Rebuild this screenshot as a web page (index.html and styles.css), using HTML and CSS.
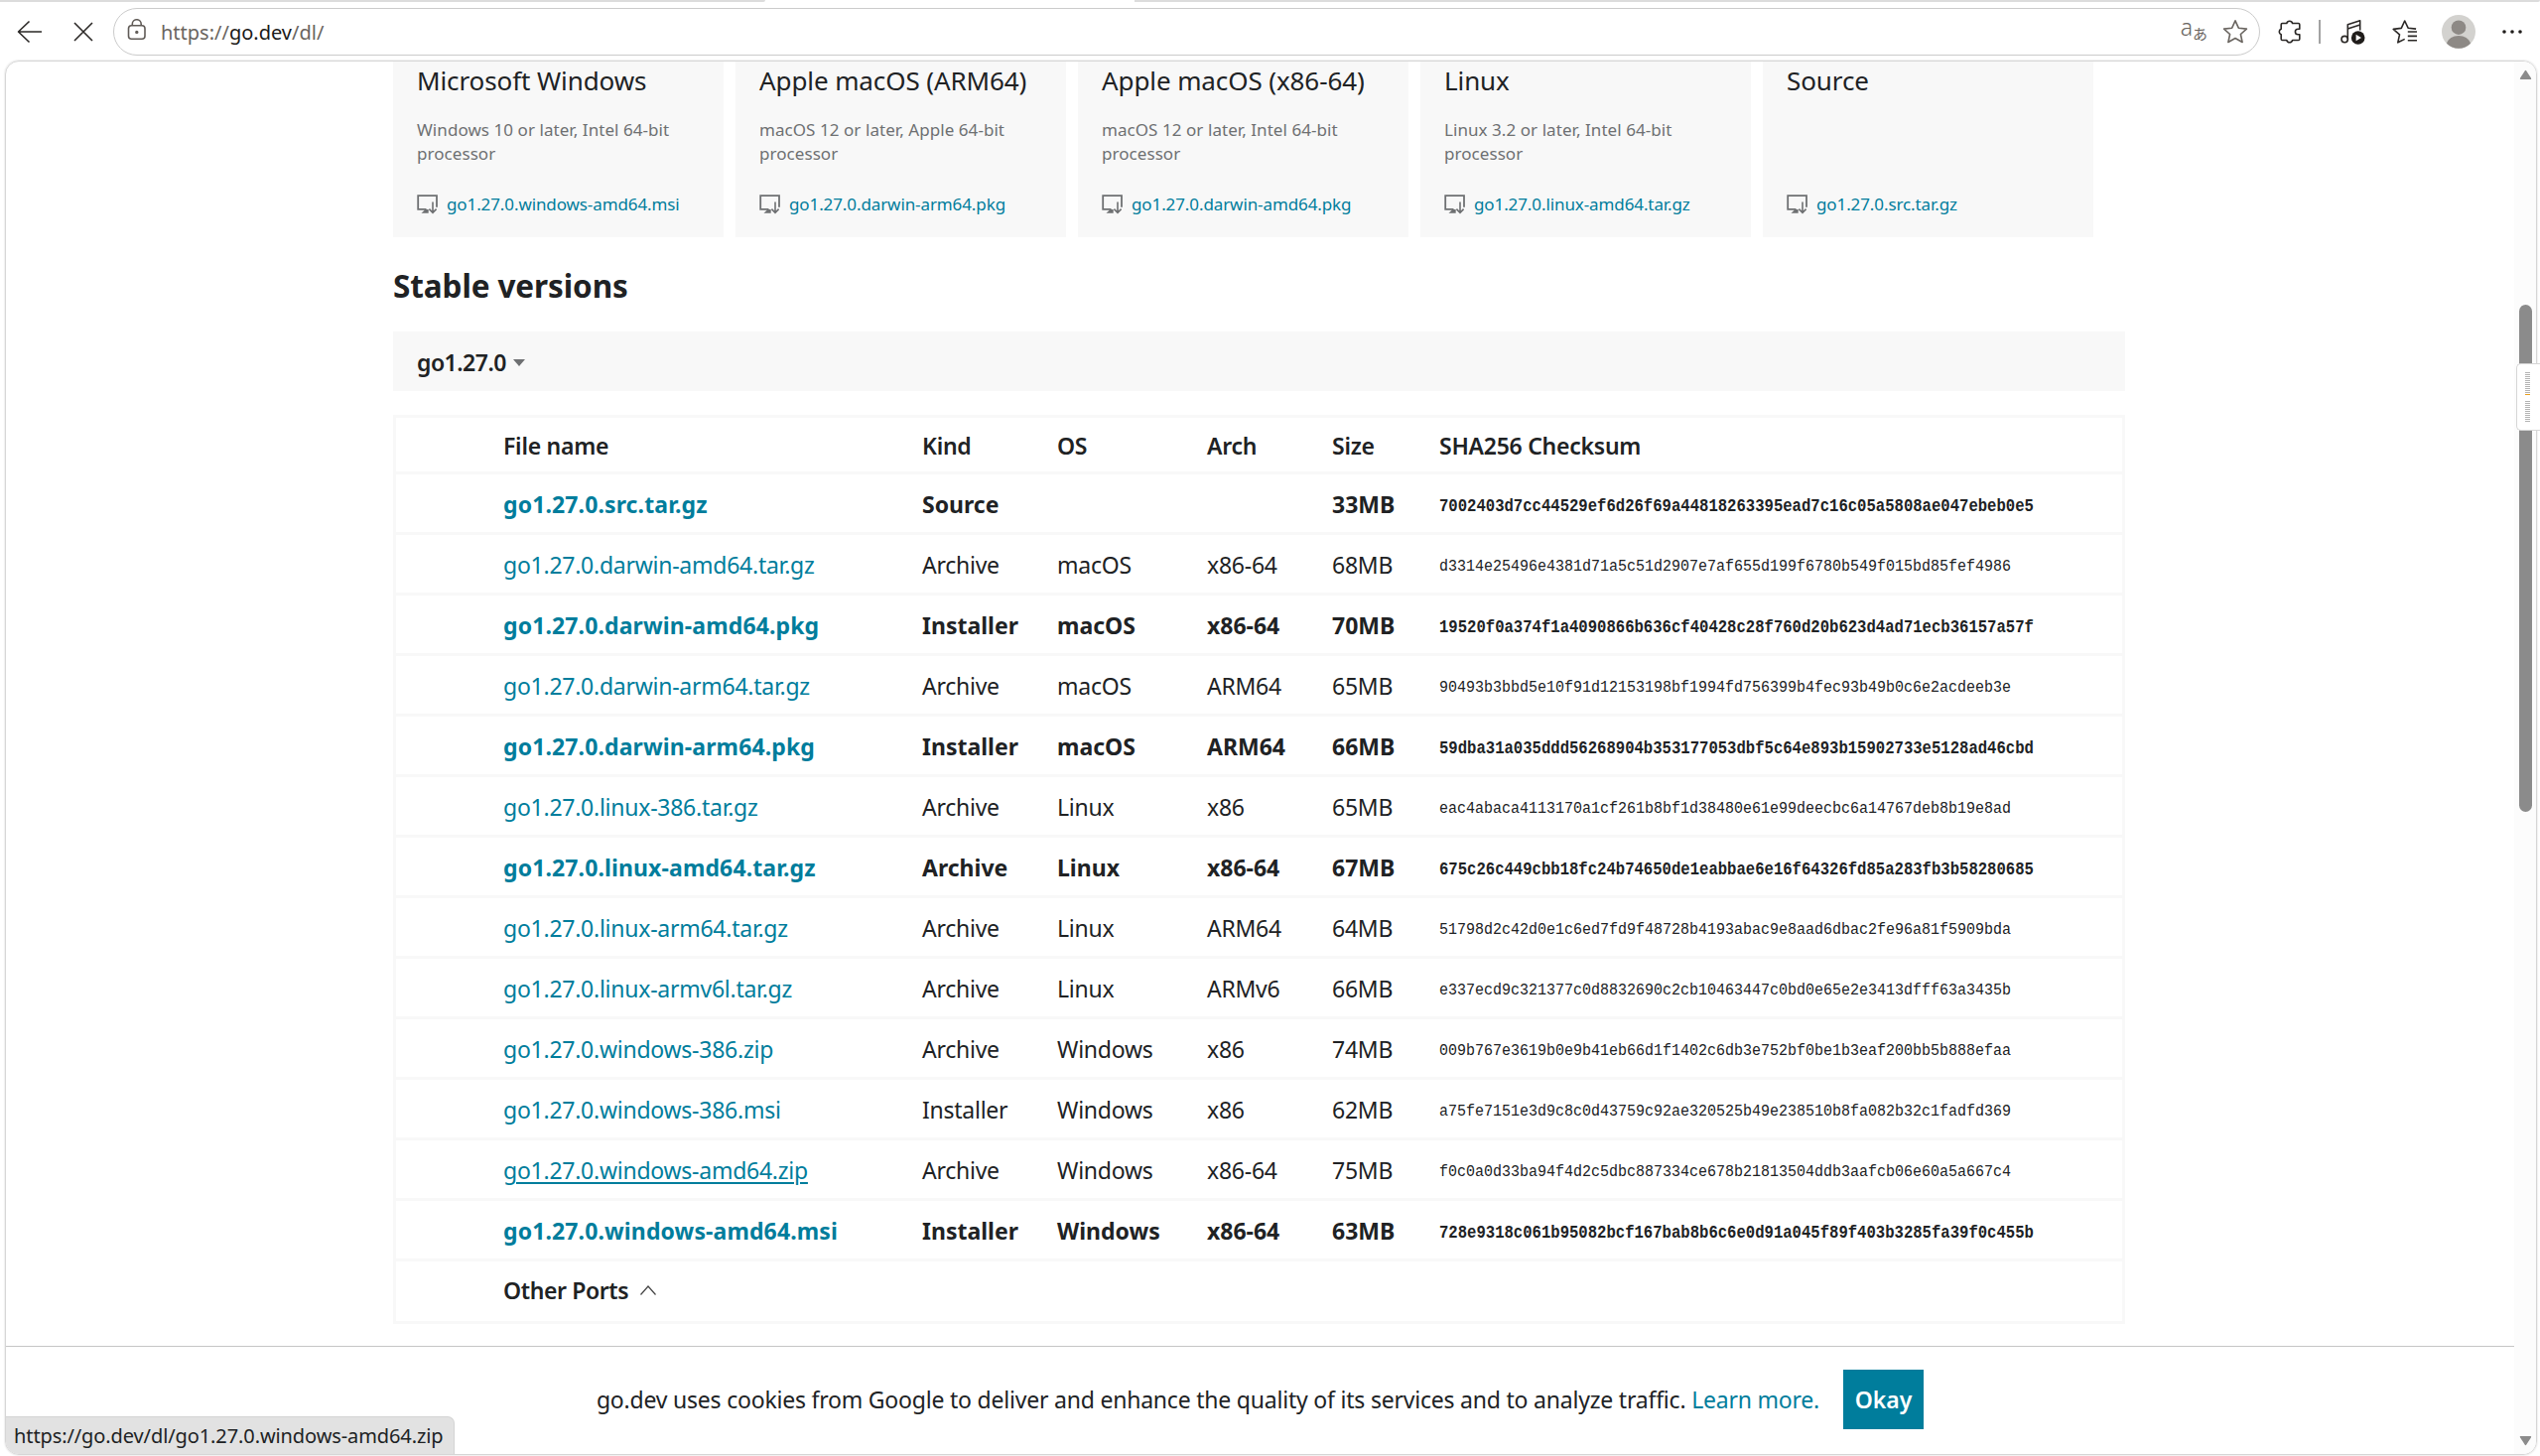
FILE: index.html
```html
<!doctype html>
<html lang="en">
    <head>
        <meta charset="UTF-8" />
        <title>All releases - The Go Programming Language</title>
        <link rel="stylesheet" href="styles.css">
    </head>
    <body>
        <svg class="sprite" xmlns="http://www.w3.org/2000/svg">
            <symbol id="get" viewBox="0 0 22 20">
                <path d="M9.5 14.8H1.2V1.2H20v11.5" fill="none" stroke="#6e7072" stroke-width="1.8" />
                <path d="M4.5 18.8l4-3.8h3.2v3.8z" fill="#6e7072" />
                <path d="M16 7.5v10.5M12.4 14.6l3.6 3.7 3.6-3.7" fill="none" stroke="#6e7072" stroke-width="1.6" />
            </symbol>
        </svg>

        <!-- Browser toolbar -->
        <div class="tabstrip">
            <div class="strip-left"></div>
            <div class="strip-right"></div>
        </div>
        <div class="toolbar">
            <svg class="back" viewBox="0 0 26 24"><path d="M25 12H1.5M12.5 1.5L1.5 12l11 10.5" /></svg>
            <svg class="stop" viewBox="0 0 20 20"><path d="M1 1l18 18M19 1L1 19" /></svg>
            <div class="address">
                <svg class="lock" viewBox="0 0 20 22">
                    <rect x="1.5" y="6.8" width="16.5" height="13.4" rx="3" />
                    <path d="M5.3 6.8V5.2a4.4 4.4 0 0 1 8.9 0v1.6" />
                    <circle cx="9.8" cy="13.4" r="0.9" />
                </svg>
                <div class="url">https://<b>go.dev</b>/dl/</div>
                <div class="translate"><span>a</span><span class="kana">あ</span></div>
                <svg class="star" viewBox="0 0 26 26"><path d="M13 1.8l3.3 7.4 8.1.9-6 5.4 1.7 8-7.1-4-7.1 4 1.7-8-6-5.4 8.1-.9z" /></svg>
            </div>
            <svg class="puzzle" viewBox="0 0 24 26"><path d="M4.5 4.5h4.3a3 3 0 0 1 5.8 0h5.9q1.3 0 1.3 1.3v4.4h-1.6a2.8 2.8 0 0 0 0 5.6h1.6v4.4q0 1.3-1.3 1.3h-5.9a3 3 0 0 1-5.8 0H4.5q-1.3 0-1.3-1.3v-4.4a3 3 0 0 1 0-5.6V5.8q0-1.3 1.3-1.3z" /></svg>
            <div class="divider"></div>
            <svg class="music" viewBox="0 0 26 26">
                <path d="M7.3 20.5V5.7l12.4-4v9.8M7.3 10l12.4-4" />
                <circle cx="4.2" cy="20.6" r="3.2" />
                <circle class="solid" cx="17.7" cy="19" r="6.8" />
                <path class="play" d="M15.6 15.8v6.4l5.4-3.2z" />
            </svg>
            <svg class="favorites" viewBox="0 0 26 26">
                <path d="M12.7 20.4l-6.9 3.4 1.7-8L1.2 10.4l8.1-1L12.7 2l3.4 7.2 8 .9M15.8 13H25M15.8 17.4H25M15.8 21.8H25" />
            </svg>
            <svg class="avatar" viewBox="0 0 34 34">
                <circle cx="17" cy="17" r="17" fill="#d3d2cf" />
                <circle cx="17" cy="12.7" r="7.3" fill="#8d8985" />
                <path d="M5 28.8c1.5-4.8 6.2-7.8 12-7.8s10.5 3 12 7.8A17 17 0 0 1 5 28.8z" fill="#8d8985" />
            </svg>
            <svg class="more" viewBox="0 0 20 6"><circle cx="2" cy="3" r="1.8" /><circle cx="10" cy="3" r="1.8" /><circle cx="18" cy="3" r="1.8" /></svg>
        </div>

        <!-- Page -->
        <div class="frame">
            <div class="page">
                <div class="downloads">
                    <div class="card">
                        <h3>Microsoft Windows</h3>
                        <p>Windows 10 or later, Intel 64-bit processor</p>
                        <a><svg><use href="#get" /></svg>go1.27.0.windows-amd64.msi</a>
                    </div>
                    <div class="card">
                        <h3>Apple macOS (ARM64)</h3>
                        <p>macOS 12 or later, Apple 64-bit processor</p>
                        <a><svg><use href="#get" /></svg>go1.27.0.darwin-arm64.pkg</a>
                    </div>
                    <div class="card">
                        <h3>Apple macOS (x86-64)</h3>
                        <p>macOS 12 or later, Intel 64-bit processor</p>
                        <a><svg><use href="#get" /></svg>go1.27.0.darwin-amd64.pkg</a>
                    </div>
                    <div class="card">
                        <h3>Linux</h3>
                        <p>Linux 3.2 or later, Intel 64-bit processor</p>
                        <a><svg><use href="#get" /></svg>go1.27.0.linux-amd64.tar.gz</a>
                    </div>
                    <div class="card">
                        <h3>Source</h3>
                        <p></p>
                        <a><svg><use href="#get" /></svg>go1.27.0.src.tar.gz</a>
                    </div>
                </div>

                <h2>Stable versions</h2>
                <div class="version">go1.27.0 <span class="caret"></span></div>

                <table class="files">
                    <thead>
                        <tr><th class="c-pad"></th><th class="c-name">File name</th><th class="c-kind">Kind</th><th class="c-os">OS</th><th class="c-arch">Arch</th><th class="c-size">Size</th><th>SHA256 Checksum</th></tr>
                    </thead>
                    <tbody>
                        <tr class="highlight"><td></td><td><a>go1.27.0.src.tar.gz</a></td><td>Source</td><td></td><td></td><td>33MB</td><td><tt>7002403d7cc44529ef6d26f69a44818263395ead7c16c05a5808ae047ebeb0e5</tt></td></tr>
                        <tr><td></td><td><a>go1.27.0.darwin-amd64.tar.gz</a></td><td>Archive</td><td>macOS</td><td>x86-64</td><td>68MB</td><td><tt>d3314e25496e4381d71a5c51d2907e7af655d199f6780b549f015bd85fef4986</tt></td></tr>
                        <tr class="highlight"><td></td><td><a>go1.27.0.darwin-amd64.pkg</a></td><td>Installer</td><td>macOS</td><td>x86-64</td><td>70MB</td><td><tt>19520f0a374f1a4090866b636cf40428c28f760d20b623d4ad71ecb36157a57f</tt></td></tr>
                        <tr><td></td><td><a>go1.27.0.darwin-arm64.tar.gz</a></td><td>Archive</td><td>macOS</td><td>ARM64</td><td>65MB</td><td><tt>90493b3bbd5e10f91d12153198bf1994fd756399b4fec93b49b0c6e2acdeeb3e</tt></td></tr>
                        <tr class="highlight"><td></td><td><a>go1.27.0.darwin-arm64.pkg</a></td><td>Installer</td><td>macOS</td><td>ARM64</td><td>66MB</td><td><tt>59dba31a035ddd56268904b353177053dbf5c64e893b15902733e5128ad46cbd</tt></td></tr>
                        <tr><td></td><td><a>go1.27.0.linux-386.tar.gz</a></td><td>Archive</td><td>Linux</td><td>x86</td><td>65MB</td><td><tt>eac4abaca4113170a1cf261b8bf1d38480e61e99deecbc6a14767deb8b19e8ad</tt></td></tr>
                        <tr class="highlight"><td></td><td><a>go1.27.0.linux-amd64.tar.gz</a></td><td>Archive</td><td>Linux</td><td>x86-64</td><td>67MB</td><td><tt>675c26c449cbb18fc24b74650de1eabbae6e16f64326fd85a283fb3b58280685</tt></td></tr>
                        <tr><td></td><td><a>go1.27.0.linux-arm64.tar.gz</a></td><td>Archive</td><td>Linux</td><td>ARM64</td><td>64MB</td><td><tt>51798d2c42d0e1c6ed7fd9f48728b4193abac9e8aad6dbac2fe96a81f5909bda</tt></td></tr>
                        <tr><td></td><td><a>go1.27.0.linux-armv6l.tar.gz</a></td><td>Archive</td><td>Linux</td><td>ARMv6</td><td>66MB</td><td><tt>e337ecd9c321377c0d8832690c2cb10463447c0bd0e65e2e3413dfff63a3435b</tt></td></tr>
                        <tr><td></td><td><a>go1.27.0.windows-386.zip</a></td><td>Archive</td><td>Windows</td><td>x86</td><td>74MB</td><td><tt>009b767e3619b0e9b41eb66d1f1402c6db3e752bf0be1b3eaf200bb5b888efaa</tt></td></tr>
                        <tr><td></td><td><a>go1.27.0.windows-386.msi</a></td><td>Installer</td><td>Windows</td><td>x86</td><td>62MB</td><td><tt>a75fe7151e3d9c8c0d43759c92ae320525b49e238510b8fa082b32c1fadfd369</tt></td></tr>
                        <tr><td></td><td><a class="hover">go1.27.0.windows-amd64.zip</a></td><td>Archive</td><td>Windows</td><td>x86-64</td><td>75MB</td><td><tt>f0c0a0d33ba94f4d2c5dbc887334ce678b21813504ddb3aafcb06e60a5a667c4</tt></td></tr>
                        <tr class="highlight"><td></td><td><a>go1.27.0.windows-amd64.msi</a></td><td>Installer</td><td>Windows</td><td>x86-64</td><td>63MB</td><td><tt>728e9318c061b95082bcf167bab8b6c6e0d91a045f89f403b3285fa39f0c455b</tt></td></tr>
                        <tr class="ports"><td></td><td colspan="6">Other Ports <svg viewBox="0 0 18 12"><path d="M1.5 10.5L9 2l7.5 8.5" /></svg></td></tr>
                    </tbody>
                </table>
            </div>

            <div class="cookies">
                <div class="cookie-text">go.dev uses cookies from Google to deliver and enhance the quality of its services and to analyze traffic. <a>Learn more.</a></div>
                <button class="okay">Okay</button>
            </div>

            <!-- Scrollbar -->
            <div class="scrollbar">
                <svg class="up" viewBox="0 0 12 10"><path d="M6 1.5L10.5 8.5H1.5z" /></svg>
                <div class="thumb"></div>
                <svg class="down" viewBox="0 0 12 10"><path d="M6 8.5L1.5 1.5h9z" /></svg>
            </div>
            <div class="link-status">https://go.dev/dl/go1.27.0.windows-amd64.zip</div>
        </div>

        <div class="meter">
            <div class="ticks ticks-top"></div>
            <div class="ticks"></div>
        </div>
    </body>
</html>
```
FILE: styles.css
```css
* {
    box-sizing: border-box;
}

body {
    font-family: "Noto Sans", "Open Sans", sans-serif;
    margin: 0;
    background-color: #fff;
    color: #202224;
    font-size: 23px;
    height: 1467px;
    overflow: hidden;
    position: relative;
}

.sprite {
    display: none;
}

h2,
h3,
p {
    margin: 0;
}

a {
    color: #007d9c;
}

/* Browser toolbar */
.tabstrip {
    display: flex;
    justify-content: space-between;
    height: 2px;
}

.strip-left,
.strip-right {
    background-color: #dcdcdc;
    width: 771px;
    border-bottom-right-radius: 2px;
}

.strip-right {
    width: 1416px;
}

.toolbar {
    display: flex;
    align-items: center;
    height: 59px;
    padding: 0 17px;
}

.toolbar svg {
    fill: none;
    stroke: #2b2826;
    stroke-width: 1.6;
    stroke-linejoin: round;
    flex-shrink: 0;
}

.back {
    width: 26px;
    height: 24px;
}

.stop {
    width: 20px;
    height: 20px;
    margin: 0 20px 0 31px;
}

.address {
    flex: none;
    width: 2163px;
    height: 48px;
    border: 1.5px solid #cbcbcb;
    border-radius: 24px;
    display: flex;
    align-items: center;
    padding: 0 11px 0 13px;
    margin-right: 18px;
}

.toolbar .lock {
    width: 20px;
    height: 22px;
    stroke: #605b57;
    margin-bottom: 3px;
}

.url {
    flex: 1;
    margin: 2px 0 0 14px;
    font-size: 20px;
    color: #6a6560;
}

.url b {
    font-weight: 400;
    color: #1b1a19;
}

.translate {
    color: #6a6560;
    font-size: 23px;
    line-height: 30px;
    margin: -6px 15px 0 0;
    font-weight: 300;
}

.kana {
    font-family: "Noto Sans CJK JP", sans-serif;
    font-size: 15px;
    font-weight: 400;
    position: relative;
    top: 4px;
}

.toolbar .star {
    width: 26px;
    height: 26px;
    stroke: #6a6560;
}

.puzzle {
    width: 24px;
    height: 26px;
}

.divider {
    width: 2px;
    height: 24px;
    background-color: #a3a3a3;
    margin: 0 20px 0 17px;
    flex: none;
}

.music,
.favorites {
    width: 26px;
    height: 26px;
    margin-right: 26px;
}

.favorites {
    margin-right: 24px;
}

.toolbar .solid {
    fill: #1f1c1a;
    stroke: #fff;
    stroke-width: 0;
}

.toolbar .play {
    fill: #fff;
    stroke: none;
}

.toolbar .avatar {
    width: 34px;
    height: 34px;
    stroke: none;
    margin-right: 27px;
}

.toolbar .more {
    width: 20px;
    height: 6px;
    fill: #1f1c1a;
    stroke: none;
}

/* Page */
.frame {
    position: relative;
    margin-left: 5px;
    width: 2551px;
    height: 1405px;
    border: 1px solid #d6d6d6;
    border-radius: 14px;
    overflow: hidden;
    display: flex;
    flex-direction: column;
    box-shadow: 0 0 2px #ccc;
}

.page {
    width: 1745px;
    margin-left: 390px;
    flex: 1;
}

.downloads {
    display: flex;
    gap: 12px;
}

.card {
    width: 333px;
    height: 177px;
    padding: 0 24px;
    background-color: #f8f8f8;
}

.card h3 {
    font-size: 26px;
    font-weight: 400;
    line-height: 38px;
    letter-spacing: -0.1px;
    white-space: nowrap;
}

.card p {
    font-size: 17px;
    line-height: 24px;
    height: 48px;
    letter-spacing: 0.06px;
    margin-top: 19px;
    color: #6e7072;
}

.card a {
    display: flex;
    align-items: center;
    font-size: 17px;
    line-height: 24px;
    letter-spacing: -0.1px;
    margin-top: 27px;
    white-space: nowrap;
}

.card svg {
    width: 22px;
    height: 20px;
    margin-right: 8px;
}

h2 {
    font-size: 31.5px;
    line-height: 48px;
    letter-spacing: -0.1px;
    margin: 25px 0 22px;
}

.version {
    height: 60px;
    background-color: #f8f8f8;
    padding: 2px 24px 0;
    display: flex;
    align-items: center;
    font-weight: 600;
    letter-spacing: -0.5px;
}

.caret {
    border: 6px solid transparent;
    border-top: 7px solid #6e7072;
    border-bottom: 0;
    margin-left: 7px;
}

.files {
    width: 100%;
    margin-top: 24px;
    table-layout: fixed;
    border: 3px solid #f8f8f8;
    border-spacing: 0;
}

.files th,
.files td {
    height: 61px;
    padding: 2px 0 0;
    text-align: left;
    white-space: nowrap;
    letter-spacing: -0.25px;
    border-top: 3px solid #f8f8f8;
}

.files th {
    height: 54px;
    font-weight: 600;
    border-top: 0;
}

.c-pad {
    width: 108px;
}

.c-name {
    width: 422px;
}

.c-kind {
    width: 136px;
}

.c-os {
    width: 151px;
}

.c-arch {
    width: 126px;
}

.c-size {
    width: 108px;
}

.files .highlight td {
    font-weight: 700;
    letter-spacing: 0;
}

.files .highlight a {
    letter-spacing: 0.12px;
}

.files .hover {
    text-decoration: underline;
    text-underline-offset: 3px;
    text-decoration-thickness: 1.5px;
}

.files tt {
    display: block;
    font-family: "Liberation Mono", monospace;
    font-size: 15px;
    letter-spacing: 0;
    padding-top: 3px;
    transform: scaleY(1.15);
}

.highlight tt {
    font-size: 15.6px;
}

.files .ports td {
    height: 63px;
    padding-bottom: 5px;
    font-weight: 600;
    letter-spacing: -0.4px;
}

.ports svg {
    width: 18px;
    height: 12px;
    margin-left: 5px;
    vertical-align: 3px;
    fill: none;
    stroke: #444;
    stroke-width: 1.2;
}

.cookies {
    display: flex;
    align-items: center;
    justify-content: center;
    gap: 24px;
    width: 2527px;
    height: 109px;
    padding-bottom: 2px;
    border-top: 1px solid #c6c6c6;
    letter-spacing: -0.21px;
}

.okay {
    width: 81px;
    height: 60px;
    padding: 0;
    border: 0;
    background-color: #007d9c;
    color: #fff;
    font-family: inherit;
    font-size: 23px;
    font-weight: 600;
}

/* Overlays at the window edge */
.scrollbar {
    position: absolute;
    top: 0;
    right: 0;
    bottom: 0;
    width: 22px;
    padding: 8px 4px;
    background-color: #fcfcfc;
    display: flex;
    flex-direction: column;
    align-items: center;
}

.scrollbar svg {
    width: 13px;
    height: 11px;
    fill: #8b8b8b;
    stroke: #8b8b8b;
    stroke-width: 1.5;
    stroke-linejoin: round;
}

.thumb {
    width: 13px;
    height: 511px;
    margin: 226px 0 auto;
    border-radius: 7px;
    background-color: #8b8b8b;
}

.link-status {
    position: absolute;
    left: 0;
    bottom: 0;
    width: 452px;
    height: 38px;
    padding-left: 8px;
    background-color: #e2e2e2;
    border: 1px solid #d4d4d4;
    border-width: 1px 1px 0 0;
    border-top-right-radius: 7px;
    font-size: 20px;
    line-height: 37px;
    letter-spacing: -0.1px;
    white-space: nowrap;
}

.meter {
    position: absolute;
    right: 0;
    top: 366px;
    width: 24px;
    height: 68px;
    padding: 8px 0 0 8px;
    background-color: #fff;
    border: 1.5px solid #d6d6d6;
    border-right: 0;
    border-radius: 5px 0 0 5px;
}

.ticks {
    width: 5px;
    height: 21px;
    background: repeating-linear-gradient(#b3b3b3 0 1px, #fff 1px 2px);
}

.ticks-top {
    height: 23px;
    margin-bottom: 6px;
    border-bottom: 1px solid #e8a020;
}
```
